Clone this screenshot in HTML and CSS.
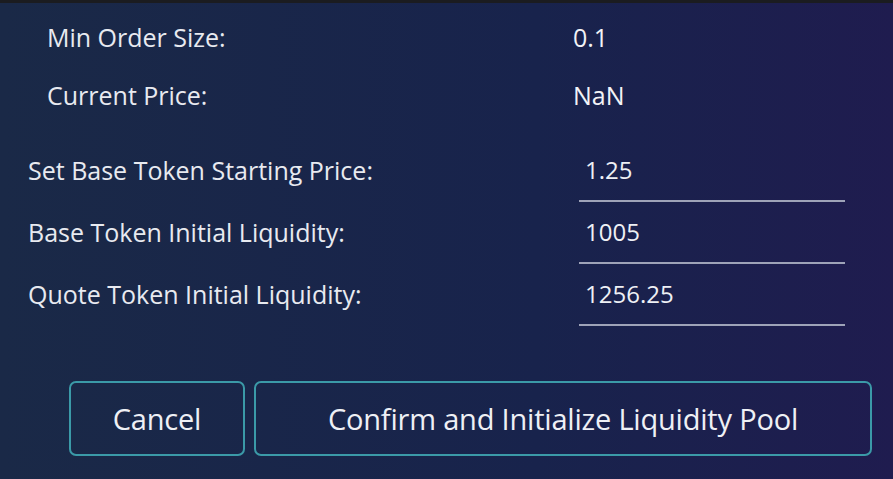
FILE: index.html
```html
<!DOCTYPE html>
<html>
<head>
<meta charset="utf-8">
<link rel="stylesheet" href="styles.css">
</head>
<body>
<div class="topbar"></div>
<div class="dialog">
  <div class="info">
    <div class="info-row"><span class="info-label">Min Order Size:</span><span class="info-value">0.1</span></div>
    <div class="info-row"><span class="info-label">Current Price:</span><span class="info-value">NaN</span></div>
  </div>
  <div class="form">
    <div class="field"><label class="field-label">Set Base Token Starting Price:</label><input class="field-input" value="1.25"></div>
    <div class="field"><label class="field-label">Base Token Initial Liquidity:</label><input class="field-input" value="1005"></div>
    <div class="field"><label class="field-label">Quote Token Initial Liquidity:</label><input class="field-input" value="1256.25"></div>
  </div>
  <div class="actions">
    <button class="btn btn-cancel">Cancel</button>
    <button class="btn btn-confirm">Confirm and Initialize Liquidity Pool</button>
  </div>
</div>
</body>
</html>
```
FILE: styles.css
```css
html, body {
  margin: 0;
  padding: 0;
  height: 100%;
}
body {
  background: #1b1c20;
  font-family: "Open Sans", "Noto Sans", sans-serif;
  color: #e8eaf0;
  overflow: hidden;
}
.topbar {
  height: 3px;
  background: #1b1c20;
}
.dialog {
  height: 476px;
  background: linear-gradient(90deg, #1a2947 0%, #18234c 60%, #1f1c4f 100%);
  box-sizing: border-box;
  padding-top: 20px;
}
.info {
  padding-left: 47px;
  display: flex;
  flex-direction: column;
  gap: 30px;
}
.info-row {
  display: flex;
  font-size: 25px;
  line-height: 28px;
}
.info-label {
  width: 526px;
}
.info-value {
  color: #f2f3f7;
}
.form {
  margin-top: 35px;
  padding-left: 28px;
  display: flex;
  flex-direction: column;
  gap: 4px;
}
.field {
  display: flex;
  align-items: flex-start;
  height: 58px;
}
.field-label {
  width: 551px;
  font-size: 25px;
  line-height: 28px;
  padding-top: 12px;
}
.field-input {
  width: 266px;
  box-sizing: border-box;
  height: 58px;
  background: transparent;
  border: none;
  border-bottom: 2px solid #9ea3b8;
  color: #eef0f5;
  font-family: inherit;
  font-size: 24px;
  padding: 0 6px 6px 6px;
  outline: none;
}
.actions {
  margin-top: 55px;
  padding-left: 69px;
  display: flex;
  gap: 9px;
}
.btn {
  height: 75px;
  background: transparent;
  border: 2px solid #3b9aa8;
  border-radius: 7px;
  color: #eef0f5;
  font-family: inherit;
  font-size: 29px;
  letter-spacing: -0.2px;
}
.btn-cancel {
  width: 176px;
}
.btn-confirm {
  width: 618px;
}
```
